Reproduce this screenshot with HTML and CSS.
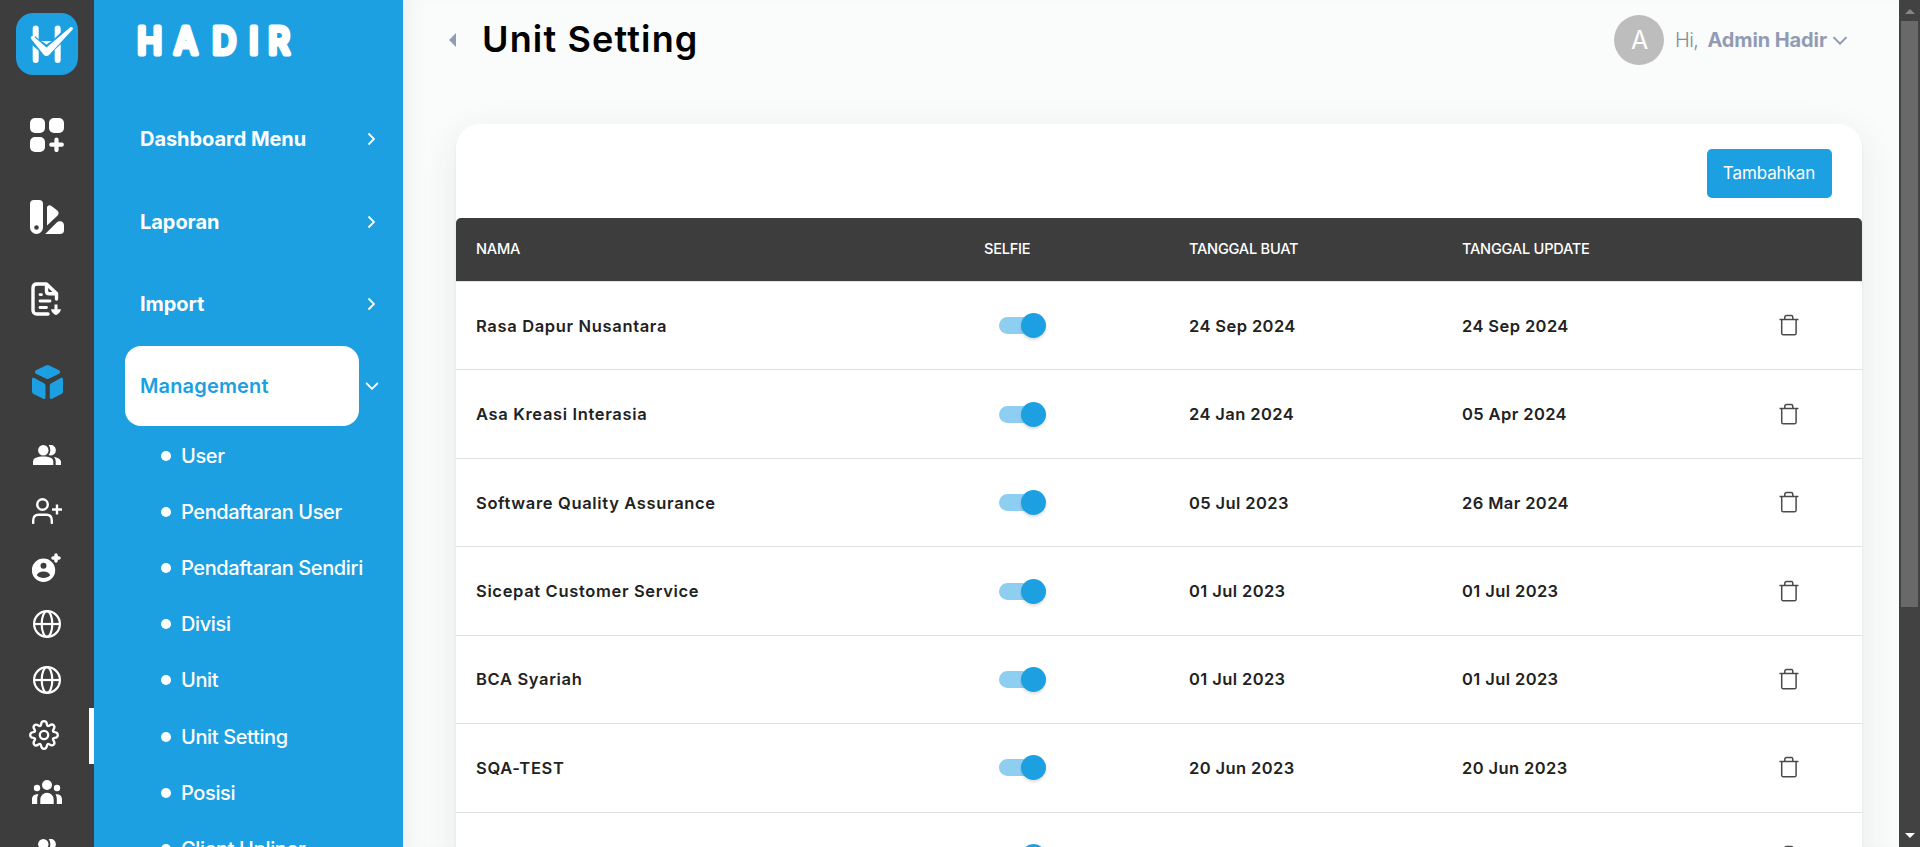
FILE: index.html
```html
<!DOCTYPE html>
<html lang="id">
<head>
<meta charset="utf-8">
<title>Unit Setting</title>
<link rel="stylesheet" href="styles.css">
</head>
<body>
<svg class="defs" aria-hidden="true">
  <symbol id="users" viewBox="0 0 28 20"><circle cx="10.3" cy="5.2" r="5.2"/><path d="M0 20v-3.300C0 13 4.500 11.600 10.300 11.600S20.300 13 20.300 16.700V20z"/><path d="M15.600.3a5.300 5.300 0 1 1 0 9.800c2.300-2.600 2.300-7 0-9.800zM20.800 12c4.500.7 7.200 2.400 7.200 5V20h-5.300v-3.300c0-1.900-.6-3.500-1.900-4.700z"/></symbol>
  <symbol id="globe" viewBox="0 0 28 28"><g fill="none" stroke="currentColor" stroke-width="2.200"><circle cx="14" cy="14" r="12.900"/><ellipse cx="14" cy="14" rx="5.300" ry="12.900"/><path d="M1 14h26"/></g></symbol>
  <symbol id="trash" viewBox="0 0 20 22"><g fill="none" stroke="#4a4a4a" stroke-width="1.500"><path d="M.5 5.500h19"/><path d="M2.700 5.500v13.700c0 1 .6 1.600 1.600 1.600h11.200c1 0 1.600-.6 1.600-1.600V5.500M5.800 5.500V3.300c0-1.100.7-1.700 1.700-1.700h4.600c1 0 1.700.6 1.700 1.700v2.200"/></g></symbol>
  <symbol id="chev" viewBox="0 0 8 14"><path d="M1.500 1.500 7 7l-5.500 5.500" fill="none" stroke="currentColor" stroke-width="1.800"/></symbol>
  <symbol id="chevd" viewBox="0 0 14 8"><path d="M1.200 1 7 6.800 12.800 1" fill="none" stroke="currentColor" stroke-width="1.800"/></symbol>
</svg>
<div class="app">
  <aside class="rail">
    <div class="logo">
      <svg viewBox="0 0 62 62" width="62" height="62"><g fill="none" stroke="#fff" stroke-linecap="round" stroke-width="6"><path d="M19.700 15.500v31.500M41.700 15.500v31.500M22 31h18"/></g><path d="m16.500 26.500 14 12.500L55.500 15" fill="none" stroke="#1ca0e2" stroke-width="8.500"/><path d="M22.500 28.500h17l-8.500 8z" fill="#1ca0e2"/><path d="M26 28.200h9l-4.500 3.200z" fill="#fff"/><path d="M15 23.800c.8-1.400 2-1 3 0L30.500 34.600 54 14.400c1.800-1.200 3.800.6 2.400 2.300L33.500 41.400c-2 2-4.200 2-6 0L15.400 26.200c-.6-.8-.8-1.600-.4-2.400z" fill="#fff"/></svg>
    </div>
    <div class="rail-main"><svg width="34" height="34" viewBox="0 0 34 34"><rect width="15" height="15" rx="5"/><rect x="19" width="15" height="15" rx="5"/><rect y="19" width="15" height="15" rx="5"/><path d="M26.500 21.500v10.500M21.300 26.700h10.500" fill="none" stroke="currentColor" stroke-width="4.200" stroke-linecap="round"/></svg></div>
    <div class="rail-main"><svg width="34" height="34" viewBox="0 0 34 34"><path fill-rule="evenodd" d="M4 0h5a4 4 0 0 1 4 4v23.500a6.500 6.500 0 0 1-13 0V4a4 4 0 0 1 4-4zm2.500 25.200a2.300 2.300 0 1 0 0 4.600 2.300 2.300 0 0 0 0-4.600z"/><path d="M17 25.500V8c0-2.500 2.500-3.500 4.500-2l5.800 4.600c1.700 1.700 1.700 3.300.3 4.900zM15.200 34 27 22.200c1-1 2-1.200 3-1 2.700.2 4 1.600 4 4v5c0 2.500-1.400 3.800-4 3.800z"/></svg></div>
    <div class="rail-main"><svg class="file" width="30" height="34" viewBox="0 0 30 34"><g fill="none" stroke="currentColor" stroke-width="3.400" stroke-linecap="round" stroke-linejoin="round"><path d="M17 32H6c-2.800 0-4-1.500-4-4V6c0-2.500 1.500-4 4-4h9.500L25.500 11.500V17M15.500 2.500V9c0 1.800 1 2.800 2.800 2.800h7"/><path d="M9 12.600h1.500M9 19h10M9 25.500h6.500" stroke-width="2.800"/></g><path d="M23.500 22.500h3v4.700h3.300c.6 1.300-2.500 5.800-4.800 5.800s-5.400-4.500-4.800-5.800h3.300z"/></svg></div>
    <div class="rail-main on"><svg width="31" height="34" viewBox="0 0 31 34"><path d="M13.800.5a4 4 0 0 1 3.400 0l9.800 4.700c1.500.9 1.500 2.700 0 3.600l-9.800 4.700a4 4 0 0 1-3.400 0L4 8.800c-1.500-.9-1.500-2.700 0-3.600zM0 14.500c0-1.400 1-2 2.300-1.400L11.500 18c1.400.8 2 1.600 2 3v11.500c0 1.300-1 1.800-2.200 1.200L2 29.200c-1.400-.7-2-1.600-2-3zM31 14.500c0-1.400-1-2-2.300-1.400L19.800 18c-1.400.8-2 1.600-2 3v11.500c0 1.300 1 1.800 2.200 1.200l9-4.500c1.400-.7 2-1.600 2-3z"/></svg></div>
    <div class="rail-sub"><svg width="28" height="20"><use href="#users"/></svg></div>
    <div class="rail-sub"><svg width="30" height="26" viewBox="0 0 30 26"><g fill="none" stroke="currentColor" stroke-width="2.400"><circle cx="10.500" cy="6.500" r="5.300"/><path d="M1.200 25v-2.500c0-4 2-5.800 5.300-5.800h8c3.300 0 5.300 1.800 5.300 5.800V25" stroke-linecap="round"/><path d="M20 11.500h10M25 6.500v10"/></g></svg></div>
    <div class="rail-sub"><svg width="30" height="30" viewBox="0 0 30 30"><path fill-rule="evenodd" d="M11.500 5.500a11.700 11.700 0 1 1 0 23.400 11.700 11.700 0 0 1 0-23.400zm0 4.200a3 3 0 1 0 0 6 3 3 0 0 0 0-6zm0 8.800c-3.500 0-6 1.600-6.700 3.800 3.200 3.700 10.200 3.700 13.400 0-.7-2.200-3.200-3.800-6.700-3.800z"/><path d="M24 2v6M21 5h6" stroke="currentColor" stroke-width="3.500" stroke-linecap="round"/></svg></div>
    <div class="rail-sub"><svg width="28" height="28"><use href="#globe"/></svg></div>
    <div class="rail-sub"><svg width="28" height="28"><use href="#globe"/></svg></div>
    <div class="rail-sub current"><svg class="gear" width="30" height="30" viewBox="0 0 30 30"><g fill="none" stroke="currentColor" stroke-width="2.300" stroke-linejoin="round"><circle cx="15" cy="15" r="4.200"/><path d="M12.100 4.300C12.300 2 13.200 1.200 15 1.200S17.700 2 17.900 4.300C18.200 6.300 19 6.500 20.500 5.500 22.400 4.200 23.500 4 24.700 5.300S25.800 7.600 24.500 9.500C23.500 11 23.700 11.800 25.700 12.100 28 12.300 28.800 13.200 28.800 15S28 17.700 25.700 17.900C23.700 18.200 23.500 19 24.500 20.500 25.800 22.400 26 23.500 24.700 24.700S22.400 25.800 20.500 24.500C19 23.500 18.200 23.700 17.900 25.700 17.700 28 16.800 28.800 15 28.800S12.300 28 12.100 25.700C11.800 23.700 11 23.500 9.500 24.500 7.600 25.800 6.500 26 5.300 24.700S4.200 22.400 5.500 20.500C6.500 19 6.300 18.200 4.300 17.900 2 17.700 1.200 16.800 1.200 15S2 12.300 4.300 12.100C6.300 11.800 6.500 11 5.500 9.500 4.200 7.600 4 6.500 5.300 5.300S7.600 4.200 9.500 5.500C11 6.500 11.800 6.300 12.100 4.300z"/></g></svg></div>
    <div class="rail-sub"><svg width="30" height="24" viewBox="0 0 30 24"><circle cx="15" cy="5" r="5"/><circle cx="5" cy="8" r="3.200"/><circle cx="25" cy="8" r="3.200"/><path d="M8.300 24v-4.500a6.700 6.700 0 0 1 13.400 0V24zM0 24v-4.500c0-3.500 2.300-5.300 6.500-5.200C5.500 16 5.200 17.500 5.200 19.500V24zM30 24v-4.500c0-3.500-2.300-5.300-6.500-5.200 1 1.700 1.300 3.200 1.300 5.200V24z"/></svg></div>
    <div class="rail-sub"><svg width="28" height="20"><use href="#users"/></svg></div>
  </aside>

  <nav class="side">
    <svg class="wordmark" width="200" height="50" viewBox="0 0 200 50"><text transform="scale(.9 1)" x="8 49 91.500 132.500 153.500" y="38.500">HADIR</text></svg>
    <div class="item"><span class="pill">Dashboard Menu</span><svg width="8" height="14"><use href="#chev"/></svg></div>
    <div class="item"><span class="pill">Laporan</span><svg width="8" height="14"><use href="#chev"/></svg></div>
    <div class="item"><span class="pill">Import</span><svg width="8" height="14"><use href="#chev"/></svg></div>
    <div class="item open"><span class="pill">Management</span><svg width="14" height="8"><use href="#chevd"/></svg></div>
    <ul class="sub">
      <li>User</li><li>Pendaftaran User</li><li>Pendaftaran Sendiri</li><li>Divisi</li><li>Unit</li><li>Unit Setting</li><li>Posisi</li><li>Client Upliner</li>
    </ul>
  </nav>

  <main class="main">
    <header class="top">
      <span class="back"></span>
      <h1>Unit Setting</h1>
      <div class="user"><span class="avatar">A</span><span class="hi">Hi,</span><b>Admin Hadir</b><svg width="16" height="9"><use href="#chevd"/></svg></div>
    </header>
    <section class="card">
      <div class="tools"><button class="add">Tambahkan</button></div>
      <div class="row head"><span>NAMA</span><span>SELFIE</span><span>TANGGAL BUAT</span><span>TANGGAL UPDATE</span><span></span></div>
      <div class="row"><span>Rasa Dapur Nusantara</span><i class="switch"></i><span>24 Sep 2024</span><span>24 Sep 2024</span><svg width="20" height="22"><use href="#trash"/></svg></div>
      <div class="row"><span>Asa Kreasi Interasia</span><i class="switch"></i><span>24 Jan 2024</span><span>05 Apr 2024</span><svg width="20" height="22"><use href="#trash"/></svg></div>
      <div class="row"><span>Software Quality Assurance</span><i class="switch"></i><span>05 Jul 2023</span><span>26 Mar 2024</span><svg width="20" height="22"><use href="#trash"/></svg></div>
      <div class="row"><span>Sicepat Customer Service</span><i class="switch"></i><span>01 Jul 2023</span><span>01 Jul 2023</span><svg width="20" height="22"><use href="#trash"/></svg></div>
      <div class="row"><span>BCA Syariah</span><i class="switch"></i><span>01 Jul 2023</span><span>01 Jul 2023</span><svg width="20" height="22"><use href="#trash"/></svg></div>
      <div class="row"><span>SQA-TEST</span><i class="switch"></i><span>20 Jun 2023</span><span>20 Jun 2023</span><svg width="20" height="22"><use href="#trash"/></svg></div>
      <div class="row"><span></span><i class="switch"></i><span></span><span></span><svg width="20" height="22"><use href="#trash"/></svg></div>
    </section>
  </main>
  <div class="scrollbar"><i class="up"></i><i class="thumb"></i><i class="down"></i></div>
</div>
</body>
</html>
```
FILE: styles.css
```css
* { box-sizing: border-box; }
body { margin: 0; overflow: hidden; font-family: Inter, "Liberation Sans", sans-serif; background: #fafcfb; }
.defs { display: none; }
svg { display: block; flex: none; fill: currentColor; }
.app { display: flex; height: 847px; overflow: hidden; }

.rail { width: 94px; flex: none; background: #3d3d3d; color: #fff; display: flex; flex-direction: column; align-items: center; }
.logo { width: 62px; height: 62px; margin: 13px 0 18.5px; border-radius: 17px; background: #1ca0e2; flex: none; }
.rail-main { width: 94px; height: 82.3px; flex: none; display: flex; align-items: center; justify-content: center; }
.rail-main .file { margin-right: 2px; }
.rail-main.on { color: #1ca0e2; }
.rail-sub { width: 94px; height: 56.2px; flex: none; display: flex; align-items: center; justify-content: center; }
.rail-main.on + .rail-sub { margin-top: 4.5px; }
.rail-sub.current { border-right: 5px solid #fff; }
.rail-sub .gear { margin: 0 2px 2px 0; }

.side { width: 309px; flex: none; background: #1ca0e2; color: #fff; display: flex; flex-direction: column; }
.wordmark { margin: 16px 0 32px 36px; flex: none; }
.wordmark text { font: 450 37px Inter, sans-serif; fill: #fff; stroke: #fff; stroke-width: 5px; stroke-linejoin: round; stroke-linecap: round; }
.item { height: 82.4px; flex: none; display: flex; align-items: center; padding-left: 31px; }
.pill { width: 234px; height: 80px; line-height: 80px; padding-left: 15px; border-radius: 16px; font-size: 20px; font-weight: 700; letter-spacing: -.05px; }
.item svg { margin-left: 8px; }
.item.open .pill { background: #fff; color: #1ca0e2; font-weight: 600; letter-spacing: .15px; }
.item.open svg { margin-left: 5.5px; }
.sub { list-style: none; margin: 0; padding: 0 0 0 67px; }
.sub li { height: 56.2px; display: flex; align-items: center; gap: 10px; font-size: 20px; font-weight: 450; letter-spacing: -.37px; white-space: nowrap; }
.sub li::before { content: ""; width: 10px; height: 10px; border-radius: 50%; background: #fff; }

.main { flex: 1; padding: 0 37px 0 53px; box-shadow: inset 20px 0 24px -18px #e9ecec; }
.top { height: 80px; display: flex; align-items: center; margin: 0 14px 44px -7px; }
.back { width: 0; height: 0; border: 7px solid transparent; border-right-color: #919bb3; border-left: 0; }
h1 { margin: -2px 0 0 26px; font-size: 36px; font-weight: 620; letter-spacing: 1.15px; color: #000; }
.user { margin-left: auto; display: flex; align-items: center; color: #919bb3; font-size: 20px; }
.avatar { width: 50px; height: 50px; border-radius: 50%; background: #bdbdbd; color: #fff; font-size: 25px; line-height: 50px; text-align: center; padding-left: 1px; }
.hi { margin: 0 9px 0 11px; color: #858d98; font-weight: 350; letter-spacing: -.6px; }
.user b { letter-spacing: -.1px; }
.user svg { margin-left: 5px; }

.card { height: 900px; background: #fff; border-radius: 24px; box-shadow: 0 10px 38px rgba(40, 50, 70, .09), 0 2px 3px rgba(0, 0, 0, .06); }
.tools { height: 94px; padding: 25px 30px 0; display: flex; justify-content: flex-end; align-items: flex-start; }
.add { width: 125px; height: 49px; border: 0; border-radius: 5px; background: #1ca0e2; color: #fff; font: 400 17px Inter, sans-serif; letter-spacing: -.1px; padding: 0 1px 1px 0; }
.row { height: 88.45px; display: grid; grid-template-columns: 508px 205px 273px 317px 1fr; align-items: center; padding-left: 20px; border-bottom: 1px solid #dfdfdf; font-size: 16.5px; font-weight: 580; color: #222; }
.row > span:first-child { letter-spacing: .66px; }
.row span { letter-spacing: .4px; }
.row svg { margin-top: -1px; }
.head { height: 64px; background: #3d3d3d; border-radius: 5px 5px 0 0; color: #fff; font-size: 14.6px; font-weight: 500; padding-bottom: 1px; }
.head span, .head > span:first-child { letter-spacing: -.25px; }
.switch { display: flow-root; width: 47px; height: 25px; margin-left: 15px; position: relative; }
.switch::before { content: ""; display: block; width: 40px; height: 17px; margin-top: 4px; border-radius: 9px; background: #8ecff1; }
.switch::after { content: ""; position: absolute; right: 0; top: 0; width: 25px; height: 25px; border-radius: 50%; background: #1ca0e2; box-shadow: 0 2px 3px rgba(0, 0, 0, .14); }

.scrollbar { width: 21px; flex: none; background: #424242; display: flex; flex-direction: column; align-items: center; }
.up, .down { width: 0; height: 0; border: 5px solid transparent; flex: none; }
.up { border-bottom-color: #858585; border-top: 0; margin: 9px 0 7px; }
.thumb { width: 17px; height: 586px; background: #696969; }
.down { border-top-color: #fff; border-bottom: 0; margin-top: auto; margin-bottom: 9px; }
```
